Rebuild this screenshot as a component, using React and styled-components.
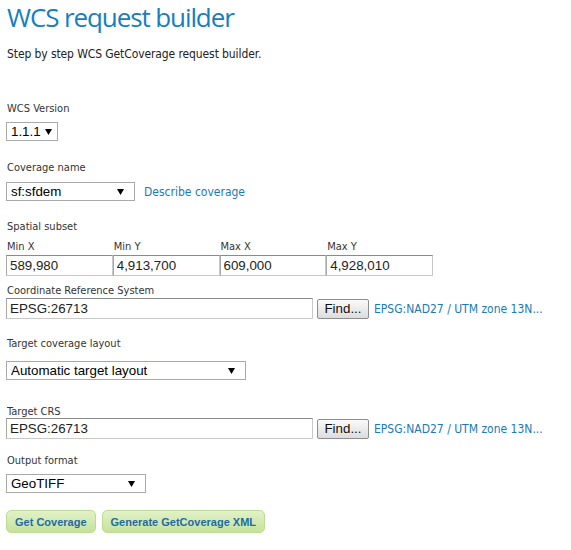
import styled, { createGlobalStyle } from "styled-components";

const GlobalStyle = createGlobalStyle`
  body {
    margin: 0;
    background: #ffffff;
  }
`;

const labelFont = `"DejaVu Sans Condensed", "DejaVu Sans", "Liberation Sans", sans-serif`;
const controlFont = `"Liberation Sans", Arial, sans-serif`;

export default function App() {
  return (
    <Page>
      <GlobalStyle />
      <Title>WCS request builder</Title>
      <Intro>Step by step WCS GetCoverage request builder.</Intro>

      <Label $top={40} $bottom={6}>WCS Version</Label>
      <Select $width={52} $arrowGap={5} text="1.1.1" />

      <Label $top={20} $bottom={7}>Coverage name</Label>
      <Row>
        <Select $width={129} text="sf:sfdem" />
        <Link $left={5}>Describe coverage</Link>
      </Row>

      <Label $top={19} $bottom={-2}>Spatial subset</Label>
      <Bbox>
        {[
          ["Min X", "589,980"],
          ["Min Y", "4,913,700"],
          ["Max X", "609,000"],
          ["Max Y", "4,928,010"],
        ].map(([name, value]) => (
          <Coord key={name}>
            <CoordLabel>{name}</CoordLabel>
            <TextInput readOnly value={value} />
          </Coord>
        ))}
      </Bbox>

      <Label $top={8} $bottom={0}>Coordinate Reference System</Label>
      <CrsRow crs="EPSG:26713" />

      <Label $top={18} $bottom={10}>Target coverage layout</Label>
      <Select $width={240} text="Automatic target layout" />

      <Label $top={25} $bottom={-1}>Target CRS</Label>
      <CrsRow crs="EPSG:26713" />

      <Label $top={15} $bottom={6}>Output format</Label>
      <Select $width={140} text="GeoTIFF" />

      <Actions>
        <GreenButton>Get Coverage</GreenButton>
        <GreenButton>Generate GetCoverage XML</GreenButton>
      </Actions>
    </Page>
  );
}

function Select({ text, $width, $arrowGap = 10 }) {
  return (
    <SelectBox $width={$width} $arrowGap={$arrowGap}>
      <span>{text}</span>
      <svg width="7" height="6" viewBox="0 0 7 6">
        <path d="M0 0 H7 L3.5 6 Z" fill="#000" />
      </svg>
    </SelectBox>
  );
}

function CrsRow({ crs }) {
  return (
    <Row>
      <TextInput readOnly value={crs} $width={307} />
      <FindButton>Find...</FindButton>
      <Link $left={1}>EPSG:NAD27 / UTM zone 13N...</Link>
    </Row>
  );
}

const Page = styled.div`
  display: flex;
  flex-direction: column;
  align-items: flex-start;
  padding: 0 6px;
  font-family: ${labelFont};
  color: #333;
`;

const Title = styled.h1`
  margin: -1px 0 0 0;
  padding-left: 1px;
  font-family: "Open Sans", "Liberation Sans", sans-serif;
  font-weight: 400;
  font-size: 26px;
  letter-spacing: -1.1px;
  line-height: 36px;
  color: #1580c0;
`;

const Intro = styled.p`
  margin: 12px 0 0 1px;
  font-size: 12px;
  letter-spacing: -0.1px;
  line-height: 15px;
  color: #222;
`;

const Label = styled.div`
  margin: ${(p) => p.$top}px 0 ${(p) => p.$bottom}px 1px;
  font-size: 11px;
  line-height: 14px;
  color: #333;
`;

const Row = styled.div`
  display: flex;
  align-items: center;
  gap: 4px;
`;

const SelectBox = styled.div`
  box-sizing: border-box;
  width: ${(p) => p.$width}px;
  height: 19px;
  display: flex;
  align-items: center;
  justify-content: space-between;
  padding: 0 ${(p) => p.$arrowGap}px 0 4px;
  border: 1px solid #a9a9a9;
  background: #fff;
  font-family: ${controlFont};
  font-size: 13.33px;
  color: #000;
`;

const Link = styled.span`
  margin-left: ${(p) => p.$left}px;
  font-size: 12px;
  color: #1a7ab8;
  white-space: nowrap;
`;

const Bbox = styled.div`
  display: grid;
  grid-template-columns: repeat(4, 106.75px);
`;

const Coord = styled.div`
  display: flex;
  flex-direction: column;
`;

const CoordLabel = styled.div`
  margin: 8px 0 1px 1px;
  font-size: 11px;
  line-height: 14px;
  color: #333;
`;

const TextInput = styled.input`
  box-sizing: border-box;
  width: ${(p) => (p.$width ? `${p.$width}px` : "100%")};
  height: 21px;
  margin: 0;
  padding: 1px 3px;
  border: 1px solid #c8c8c8;
  border-top-color: #8a8a8a;
  border-left-color: #a8a8a8;
  border-radius: 0;
  outline: none;
  background: #fff;
  font-family: ${controlFont};
  font-size: 13.33px;
  color: #222;
`;

const FindButton = styled.button`
  box-sizing: border-box;
  height: 20px;
  width: 52px;
  padding: 0;
  border: 1px solid #8e8e8e;
  border-radius: 2px;
  background: linear-gradient(#fafafa, #dcdcdc);
  font-family: ${controlFont};
  font-size: 13.33px;
  color: #111;
`;

const Actions = styled.div`
  display: flex;
  gap: 6px;
  margin-top: 17px;
`;

const GreenButton = styled.button`
  box-sizing: border-box;
  height: 23px;
  padding: 0 8px;
  border: 1px solid #bcdc93;
  border-radius: 5px;
  background: linear-gradient(#e2f1c8, #c5e29a);
  font-family: ${controlFont};
  font-weight: 700;
  font-size: 11px;
  color: #1f6aa5;
`;
